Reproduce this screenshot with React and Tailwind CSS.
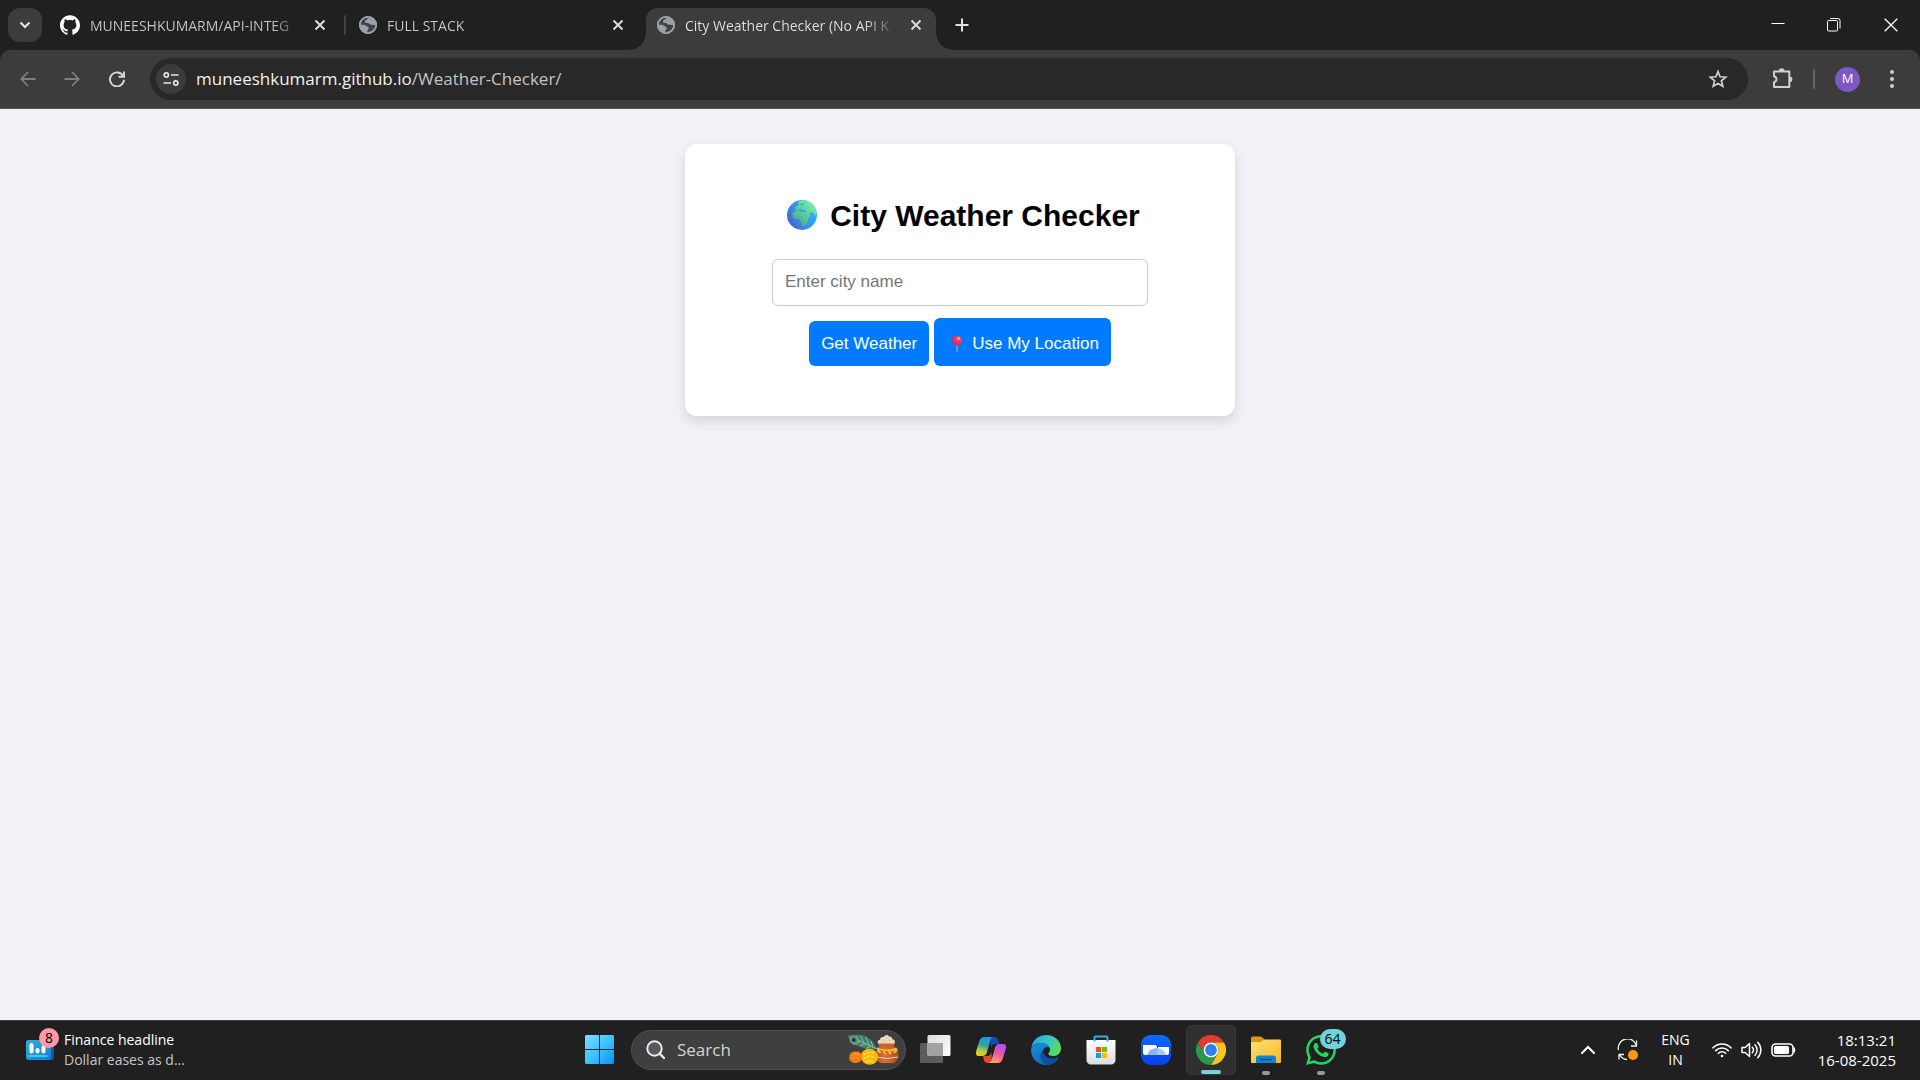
import { SiGithub, SiWhatsapp } from "react-icons/si";

function GlobeFavicon() {
  return (
    <svg viewBox="0 0 18 18" className="h-[18px] w-[18px] shrink-0" aria-hidden="true">
      <circle cx="9" cy="9" r="9" fill="#9aa0a6" />
      <path
        d="M10.500 1.800C8.800 2 8.400 3 7.500 3.800 6 4.300 5.600 5.600 6.200 6.600 7.500 7.300 9.500 6.800 10.500 8c.7 1 2.300.6 3.400.8.8.3 2 .6 2.300-.4.2 2.600-1.200 5.300-3.700 6.700-1.200.8-2.700 1.200-4.200 1 .2-1-.3-1.600.7-2.400 1-.6 1.200-1.700.3-2.400C8 10.500 6.500 9 4.500 8.800c-1-.1-2.200.2-2.800-.6C2 4.800 5 1.600 8.800 1.700z"
        fill="#3f4347"
      />
      <path d="M10.500 1.800c-.4 1-.9 1.300-.3 2.200.4.800-1.400 1.200-.9 2 .7.900 2.200.2 3 1.200 1 1 2.800.6 3.900.8-.2-3-2.400-5.600-5.700-6.200z" fill="#9aa0a6" />
      <circle cx="9" cy="9" r="8.200" fill="none" stroke="#9aa0a6" strokeWidth="1.600" />
    </svg>
  );
}

function CloseGlyph() {
  return (
    <svg viewBox="0 0 12 12" className="h-3 w-3" aria-hidden="true">
      <path d="M1.500 1.500l9 9M10.500 1.500l-9 9" stroke="#dedede" strokeWidth="1.900" />
    </svg>
  );
}

function Tab({ icon, title, active }) {
  return (
    <div className="flex h-[34px] min-w-0 flex-1 items-center gap-2.5 pr-3 pl-[11px]">
      {icon}
      <span
        className={
          active
            ? "min-w-0 flex-1 bg-[linear-gradient(90deg,#e4e4e4_84%,#3c3c3c)] bg-clip-text text-[14px] whitespace-nowrap text-transparent"
            : "min-w-0 flex-1 bg-[linear-gradient(90deg,#c8c8c8_86%,#1f2120)] bg-clip-text text-[14px] whitespace-nowrap text-transparent"
        }
      >
        {title}
      </span>
      <button type="button" aria-label={"Close " + title} className="flex h-4 w-4 shrink-0 items-center justify-center">
        <CloseGlyph />
      </button>
    </div>
  );
}

function TabStrip() {
  return (
    <div className="flex h-[50px] items-center bg-[#1f2120] pl-2">
      <button type="button" aria-label="Search tabs" className="flex h-[34px] w-[34px] shrink-0 items-center justify-center rounded-[12px] bg-[#3c3c3c]">
        <svg viewBox="0 0 12 8" className="h-2 w-3" aria-hidden="true">
          <path d="M1.500 1.500L6 6l4.500-4.500" fill="none" stroke="#e8e8e8" strokeWidth="2" />
        </svg>
      </button>
      <div className="flex w-[298px] pl-[7px]">
        <Tab icon={<SiGithub className="h-5 w-5 shrink-0 text-white" aria-hidden="true" />} title="MUNEESHKUMARM/API-INTEG" />
      </div>
      <div className="ml-1 h-5 w-0.5 shrink-0 rounded bg-[#3f4140]" />
      <div className="ml-0.5 flex w-[290px]">
        <Tab icon={<GlobeFavicon />} title="FULL STACK" />
      </div>
      <div className="ml-2 flex w-[290px] self-stretch pt-2">
        <div className="relative flex w-full rounded-t-[12px] bg-[#3c3c3c]">
          <span className="absolute bottom-0 -left-4 h-4 w-4 bg-[radial-gradient(circle_at_0_0,transparent_15px,#3c3c3c_16px)]" />
          <span className="absolute -right-4 bottom-0 h-4 w-4 bg-[radial-gradient(circle_at_100%_0,transparent_15px,#3c3c3c_16px)]" />
          <Tab active icon={<GlobeFavicon />} title="City Weather Checker (No API K" />
        </div>
      </div>
      <button type="button" aria-label="New tab" className="ml-[18px] flex h-4 w-4 shrink-0 items-center justify-center">
        <svg viewBox="0 0 14 14" className="h-3.5 w-3.5" aria-hidden="true">
          <path d="M7 .5v13M.5 7h13" stroke="#e0e0e0" strokeWidth="2" />
        </svg>
      </button>
      <div className="ml-auto flex items-center">
        <button type="button" aria-label="Minimize" className="flex h-12 w-14 items-center justify-center">
          <svg viewBox="0 0 14 14" className="h-3.5 w-3.5" aria-hidden="true">
            <path d="M.5 5.500h13" stroke="#fff" />
          </svg>
        </button>
        <button type="button" aria-label="Restore" className="flex h-12 w-14 items-center justify-center">
          <svg viewBox="0 0 14 14" className="h-3.5 w-3.5" fill="none" stroke="#fff" aria-hidden="true">
            <rect x=".5" y="2.500" width="10" height="10.500" rx="1" />
            <path d="M3 .5h8a2 2 0 012 2v8" />
          </svg>
        </button>
        <button type="button" aria-label="Close window" className="flex h-12 w-[58px] items-center justify-center">
          <svg viewBox="0 0 14 14" className="h-3.5 w-3.5" aria-hidden="true">
            <path d="M.7.7l12.600 12.600M13.300.7L.7 13.300" stroke="#fff" strokeWidth="1.300" />
          </svg>
        </button>
      </div>
    </div>
  );
}

function Toolbar() {
  return (
    <div className="bg-[#1f2120]">
      <div className="flex h-[59px] items-center rounded-t-[10px] border-b border-[#515151] bg-[#3c3c3c] pl-[18px]">
        <button type="button" aria-label="Back" className="flex h-5 w-5 items-center justify-center">
          <svg viewBox="0 0 16 16" className="h-4 w-4" fill="none" stroke="#7f7f7f" strokeWidth="1.800" aria-hidden="true">
            <path d="M15.500 8H1.500M8 1L1.300 8 8 15" />
          </svg>
        </button>
        <button type="button" aria-label="Forward" className="ml-6 flex h-5 w-5 items-center justify-center">
          <svg viewBox="0 0 16 16" className="h-4 w-4" fill="none" stroke="#7f7f7f" strokeWidth="1.800" aria-hidden="true">
            <path d="M.5 8h14M8 1l6.700 7L8 15" />
          </svg>
        </button>
        <button type="button" aria-label="Reload" className="ml-[25px] flex h-5 w-5 items-center justify-center">
          <svg viewBox="0 0 16 16" className="h-4 w-4" fill="none" stroke="#d8d8d8" strokeWidth="1.900" aria-hidden="true">
            <path d="M14 4.800A7 7 0 1015 8.800M15 .5v5.300H9.600" />
          </svg>
        </button>
        <div className="ml-[23px] flex h-[42px] min-w-0 flex-1 items-center rounded-full bg-[#282828] pr-5 pl-1.5">
          <button type="button" aria-label="View site information" className="flex h-[30px] w-[30px] shrink-0 items-center justify-center rounded-full bg-[#3c3c3c]">
            <svg viewBox="0 0 16 14" className="h-3.5 w-4" fill="none" stroke="#e3e3e3" strokeWidth="1.700" aria-hidden="true">
              <circle cx="3.300" cy="3" r="2.100" />
              <path d="M8 3h7.500M.5 11H8" />
              <circle cx="12.800" cy="11" r="2.100" />
            </svg>
          </button>
          <div className="ml-2.5 min-w-0 flex-1 text-[17px] whitespace-nowrap text-[#f0f0f0]">
            muneeshkumarm.github.io<span className="text-[#c4c4c4]">/Weather-Checker/</span>
          </div>
          <button type="button" aria-label="Bookmark this tab" className="flex h-5 w-5 items-center justify-center">
            <svg viewBox="0 0 20 20" className="h-5 w-5" fill="none" stroke="#cfcfcf" strokeWidth="1.700" aria-hidden="true">
              <path d="M10 2.600l2.100 5.200 5.600.4-4.300 3.600 1.400 5.500L10 14.400l-4.800 2.900 1.400-5.500-4.300-3.600 5.600-.4z" />
            </svg>
          </button>
        </div>
        <button type="button" aria-label="Extensions" className="ml-[23px] flex h-6 w-6 items-center justify-center">
          <svg viewBox="0 0 22 22" className="h-[22px] w-[22px]" aria-hidden="true">
            <path d="M2 3.600h15.300v15.300H2v-4.700c1.600-.5 2.500-1.500 2.500-3S3.600 8.700 2 8.200z" fill="none" stroke="#cfcfcf" strokeWidth="2" strokeLinejoin="round" />
            <path d="M6.800 3.200a2.900 2.900 0 015.800 0zM17.500 8.400a2.900 2.900 0 010 5.800z" fill="#cfcfcf" />
          </svg>
        </button>
        <div className="ml-[18px] h-5 w-0.5 rounded bg-[#666]" />
        <button type="button" aria-label="Profile" className="ml-5 flex h-[25px] w-[25px] items-center justify-center rounded-full bg-[#7e57c2] text-[13px] text-white">
          M
        </button>
        <button type="button" aria-label="Menu" className="mr-[18px] ml-[22px] flex h-5 w-5 items-center justify-center">
          <svg viewBox="0 0 4 18" className="h-[18px] w-1" fill="#cfcfcf" aria-hidden="true">
            <circle cx="2" cy="2" r="2" />
            <circle cx="2" cy="9" r="2" />
            <circle cx="2" cy="16" r="2" />
          </svg>
        </button>
      </div>
    </div>
  );
}

function EarthEmoji() {
  return (
    <svg viewBox="0 0 32 32" className="h-8 w-8 shrink-0" aria-hidden="true">
      <defs>
        <linearGradient id="sea" x1="1" y1="0.200" x2="0" y2="0.900">
          <stop offset="0" stopColor="#35b9ff" />
          <stop offset=".5" stopColor="#3594ee" />
          <stop offset="1" stopColor="#4856c4" />
        </linearGradient>
        <linearGradient id="land" x1="1" y1="0" x2="0.200" y2="1">
          <stop offset="0" stopColor="#7dffb0" />
          <stop offset="1" stopColor="#43a588" />
        </linearGradient>
      </defs>
      <circle cx="16" cy="16" r="15" fill="url(#sea)" />
      <path
        d="M12 2.600l5-1.500c6 .2 11 4 13 9.500l.7 4-1.700 2.200-1.800-3.300-3.200.2-.8 1.200 1.500 1-1.800 2.600-1 4-2.300 3.500-2.200 1.500-1.800-.8-.8-3.800-1.300-2.800-4 .2-2.800-2-.4-3.600L8.500 12.200l4-.9 4 1.900 3.500-.2-.5-2-3.300.2-1.200-1.500-2.300 1.300-4-.2.7-2.800 3.200-1.800z"
        fill="url(#land)"
      />
      <path d="M14 5.500l2.500-1.200 2 .5-1.800 1.400zM9.500 6l2-1.500.5 1.700z" fill="#359be5" />
    </svg>
  );
}

function PinEmoji() {
  return (
    <svg viewBox="0 0 22 20" className="h-5 w-[22px] shrink-0" aria-hidden="true">
      <defs>
        <radialGradient id="pin" cx=".65" cy=".3" r=".7">
          <stop offset="0" stopColor="#ff7a9c" />
          <stop offset=".35" stopColor="#f93b6c" />
          <stop offset="1" stopColor="#d5225f" />
        </radialGradient>
      </defs>
      <path d="M10.200 9h1.600v8.500l-.8 1-.8-1z" fill="#8f94b5" />
      <circle cx="11" cy="6.500" r="5" fill="url(#pin)" />
      <circle cx="12.800" cy="4.600" r="1" fill="#ffc5d5" />
    </svg>
  );
}

function WeatherCard() {
  return (
    <main className="flex flex-1 items-start justify-center bg-[#f0f2f6] pt-[35px] font-['Liberation_Sans',sans-serif]">
      <section className="flex w-[550px] max-w-full flex-col items-center rounded-[12px] bg-white px-[87px] pt-[53px] pb-[50px] shadow-[0_5px_12px_rgba(0,0,0,0.12)]">
        <h1 className="flex h-9 items-center gap-3 pl-1.5 text-[30px] font-bold whitespace-nowrap text-black">
          <EarthEmoji />
          City Weather Checker
        </h1>
        <form className="mt-[26px] flex w-full flex-col items-center" onSubmit={(e) => e.preventDefault()}>
          <input
            type="text"
            aria-label="City name"
            placeholder="Enter city name"
            className="h-[47px] w-full rounded-[6px] border border-[#ccc] bg-white px-3 pb-0.5 text-[17px] text-black placeholder:text-[#757575]"
          />
          <div className="mt-3 flex items-end gap-[5px]">
            <button type="submit" className="flex h-[45px] items-center rounded-[6px] bg-[#007bff] px-3 text-[17px] whitespace-nowrap text-white">
              Get Weather
            </button>
            <button type="button" className="flex h-12 items-center gap-1 rounded-[6px] bg-[#007bff] px-3 pt-1 text-[17px] whitespace-nowrap text-white">
              <PinEmoji />
              Use My Location
            </button>
          </div>
        </form>
      </section>
    </main>
  );
}

function WidgetIcon() {
  return (
    <svg viewBox="0 0 28 22" className="h-[22px] w-7" aria-hidden="true">
      <defs>
        <linearGradient id="widget" x1="0" y1="0" x2="1" y2="1">
          <stop offset="0" stopColor="#2fb0d8" />
          <stop offset="1" stopColor="#1979d4" />
        </linearGradient>
      </defs>
      <rect x="8" y="1" width="20" height="20" rx="2.500" fill="#1553a4" />
      <rect x="0" y="1" width="25" height="20" rx="2.500" fill="url(#widget)" />
      <path d="M5.500 6v6.500M11.500 11v1.500M17.500 8v4.500" stroke="#fff" strokeWidth="4" strokeLinecap="round" />
      <path d="M3.500 17h17" stroke="#22d4f5" strokeWidth="2" strokeLinecap="round" />
    </svg>
  );
}

function StartIcon() {
  return (
    <svg viewBox="0 0 29 29" className="h-[29px] w-[29px]" aria-hidden="true">
      <defs>
        <linearGradient id="start" gradientUnits="userSpaceOnUse" x1="0" y1="0" x2="29" y2="29">
          <stop offset="0" stopColor="#82dcff" />
          <stop offset=".5" stopColor="#3cc3ff" />
          <stop offset="1" stopColor="#0c90f5" />
        </linearGradient>
      </defs>
      <path d="M1 0h13v14H0V1zM15 0h13l1 1v13H15zM0 15h14v14H1l-1-1zM15 15h14v13l-1 1H15z" fill="url(#start)" />
    </svg>
  );
}

function FestivalArt() {
  return (
    <svg viewBox="0 0 52 32" className="h-8 w-[52px]" aria-hidden="true">
      <defs>
        <linearGradient id="pot" x1="0" y1="0" x2="1" y2="0">
          <stop offset="0" stopColor="#b8502a" />
          <stop offset=".4" stopColor="#d9713d" />
          <stop offset="1" stopColor="#a54722" />
        </linearGradient>
      </defs>
      <path d="M.5 1.500C8 0 15 0 20 3c5 3 8 7 10 12-4 1-9 0-13-1-5-1-9-3-12-6C3 6 1 4 .5 1.500z" fill="#3f7d74" />
      <path d="M3 3l27 12M9 2l3 5M14 2l3 7M19 3l3 8M24 7l2 6M8 9l6-2M13 12l6-2.500M19 14.500l5-2.500" stroke="#9cc9a0" strokeWidth=".8" fill="none" />
      <ellipse cx="7.500" cy="6.500" rx="5" ry="4.200" fill="#b3954a" transform="rotate(25 7.500 6.500)" />
      <ellipse cx="7.300" cy="6.300" rx="3.700" ry="3" fill="#1fa6a8" transform="rotate(25 7.300 6.300)" />
      <circle cx="6.800" cy="6" r="2" fill="#1d2a86" />
      <path d="M31 13h17c3 3 4 6 3.500 9-.5 4-3 6.500-5 7H34c-3-1-5-4-5-7 0-4 1-7 2-9z" fill="url(#pot)" />
      <path d="M31 9h17l-1.500 4.500h-14z" fill="#c9622f" />
      <path d="M30 13.500q10 4 19.500 0l1.200 3-3 3-2-2-2.500 3.500-2.700-3-2.500 3-2.500-3.500-2.500 2-3-2z" fill="#f5b72c" />
      <path d="M33 16l1.500 2L36 16.500M38 17l1.500 2 1.500-2M43.500 17l1.500 1.500 1.500-2" fill="none" stroke="#b8502a" strokeWidth="1" />
      <path d="M29.500 23q10 3 21.500 0" fill="none" stroke="#f6d9b0" strokeWidth="1" />
      <path d="M31 9.500c-1-2 .3-3.500 2-3.800 0-2 2-3 3.500-2.500C37.500.8 41-.2 42 2.500c2-.3 3.500 1 3.300 2.700 2.200.3 3.200 2 2.200 4.300z" fill="#ead9b8" />
      <path d="M35 6h1M39 4h1M42 6.500h1M38 8h1" stroke="#bca67c" strokeWidth="1.200" />
      <path d="M2.500 22c0-3 3-4.500 6-4.500s6 .5 6.500 4c1.500 3-1 7-6 7.500-4 .3-8-2.500-6.500-7z" fill="#f47b12" />
      <path d="M5 22q4-3 8 0M5 25q4-3 8 1M7 19.500h4" stroke="#ffb13b" strokeWidth="1" fill="none" strokeDasharray="2 1" />
      <path d="M14.500 22c-.5-4 3-7 7-7.300 5-.2 9.500 3 9.500 8 0 5-4 8-8.500 8-5 0-8.500-3.500-8-8.700z" fill="#f7b90c" />
      <path d="M17 21q5-5 11-1M17 25q5-5 11-1M19 28.500q4-3 8 0" stroke="#ffdf4d" strokeWidth="1.600" fill="none" strokeDasharray="3 1" />
    </svg>
  );
}

function TaskViewIcon() {
  return (
    <svg viewBox="0 0 31 29" className="h-[29px] w-[31px]" aria-hidden="true">
      <defs>
        <linearGradient id="tvFront" x1="0" y1="0" x2="1" y2="1">
          <stop offset="0" stopColor="#dcdcdc" />
          <stop offset="1" stopColor="#ffffff" />
        </linearGradient>
      </defs>
      <rect x="0" y="8" width="23" height="20" rx="1.500" fill="#5c5c5c" />
      <rect x="7.500" y="0" width="23" height="21" rx="1.500" fill="url(#tvFront)" />
      <path d="M7.500 8H23v13H9l-1.500-1.500z" fill="#a3a3a3" />
    </svg>
  );
}

function CopilotIcon() {
  return (
    <svg viewBox="0 0 30 26" className="h-[26px] w-[30px]" aria-hidden="true">
      <defs>
        <linearGradient id="cpA" x1=".6" y1="0" x2=".3" y2="1">
          <stop offset="0" stopColor="#1b96ee" />
          <stop offset=".45" stopColor="#2fa8a0" />
          <stop offset=".75" stopColor="#b5cf3a" />
          <stop offset="1" stopColor="#f0c630" />
        </linearGradient>
        <linearGradient id="cpB" x1=".7" y1="0" x2=".3" y2="1">
          <stop offset="0" stopColor="#a653ee" />
          <stop offset=".5" stopColor="#ea5a9c" />
          <stop offset="1" stopColor="#ffa763" />
        </linearGradient>
      </defs>
      <path d="M14 0h4.500c2.300 0 3.200 1.400 3.800 3.300L23.500 7H19c-3 0-3 2-4 4z" fill="#1749b5" />
      <path d="M16 26h-4.500c-2.300 0-3-1.400-3.600-3.300L7 19h4.500c2.500 0 3-2 3.800-4z" fill="#e8482b" />
      <path d="M8.500 0h9c-2 0-2.700 1.700-3.300 3.700L11 15c-.8 2.700-2 4-4.700 4H3c-3 0-3.600-2.300-2.700-5.200L3 5C4 2 5.400 0 8.500 0z" fill="url(#cpA)" />
      <path d="M21.500 26h-9c2 0 2.700-1.700 3.300-3.700L19 11c.8-2.700 2-4 4.700-4H27c3 0 3.600 2.300 2.700 5.200L27 21c-1 3-2.400 5-5.500 5z" fill="url(#cpB)" />
    </svg>
  );
}

function EdgeIcon() {
  return (
    <svg viewBox="0 0 30 30" className="h-[30px] w-[30px]" aria-hidden="true">
      <defs>
        <linearGradient id="edgeTop" x1="0" y1=".3" x2="1" y2=".7">
          <stop offset="0" stopColor="#27a9dc" />
          <stop offset=".5" stopColor="#35c8c4" />
          <stop offset="1" stopColor="#62dc50" />
        </linearGradient>
        <linearGradient id="edgeLow" x1="0" y1="0" x2=".6" y2="1">
          <stop offset="0" stopColor="#1c8fdf" />
          <stop offset="1" stopColor="#0e63b8" />
        </linearGradient>
      </defs>
      <path d="M.3 13C1.500 5 7.500 0 15 0c9 0 15 6.500 15 13.200 0 5-3.500 7.800-7.800 7.800-3.700 0-5.200-1.500-5-2.500 1-1 1.800-2 1.800-4 0-3-3.500-6.500-8.500-6.500C5.500 8 1.500 10 .3 13z" fill="url(#edgeTop)" />
      <path d="M.2 13.500C1.800 10 6 8 10.500 8c4 0 7 2 8 4.500-3-1.500-6.300.5-6.600 4.500-.3 5 4.600 9 10.600 8 2-.3 3.500-1 5-2-2.700 4.500-7 7-12.500 7C6 30-.8 22.500.2 13.500z" fill="url(#edgeLow)" />
      <path d="M11.900 15.500c-4 3-4 10 3.600 14.400 5.500-.1 9.500-2.700 12-6.900.3-.7-.3-1.200-1-.8-5.500 2.800-14 .8-14.600-6.700z" fill="#0c4f9d" />
    </svg>
  );
}

function StoreIcon() {
  return (
    <svg viewBox="0 0 30 30" className="h-[30px] w-[30px]" aria-hidden="true">
      <defs>
        <linearGradient id="bag" x1="0" y1="0" x2="0" y2="1">
          <stop offset="0" stopColor="#ffffff" />
          <stop offset="1" stopColor="#dcdcdc" />
        </linearGradient>
      </defs>
      <path d="M.5 5h29v20a4.500 4.500 0 01-4.500 4.500H5A4.500 4.500 0 01.5 25z" fill="url(#bag)" />
      <path d="M8.500 6.500v-4A1 1 0 019.500 1.500h11a1 1 0 011 1v4" fill="none" stroke="#27b0ea" strokeWidth="2" />
      <path d="M10 12h5v5h-5z" fill="#f25022" />
      <path d="M16 12h5v5h-5z" fill="#7fba00" />
      <path d="M10 18h5v5h-5z" fill="#00a4ef" />
      <path d="M16 18h5v5h-5z" fill="#ffb900" />
    </svg>
  );
}

function ZoomIcon() {
  return (
    <svg viewBox="0 0 30 30" className="h-[30px] w-[30px]" aria-hidden="true">
      <defs>
        <linearGradient id="zoomBg" x1="0" y1="0" x2="0" y2="1">
          <stop offset="0" stopColor="#0a6bff" />
          <stop offset="1" stopColor="#0a3fe8" />
        </linearGradient>
      </defs>
      <rect width="30" height="30" rx="9.500" fill="url(#zoomBg)" />
      <path d="M2 10h11.500a2.500 2.500 0 012.500 2.500V20H4.500A2.500 2.500 0 012 17.500z" fill="#fff" />
      <path d="M17 12h11v6a2 2 0 01-2 2h-9z" fill="#fff" />
      <path d="M6.500 20c.5-4 4-6.700 9.500-6.700V20z" fill="#86b4f7" />
      <path d="M16 13.300c5 .3 8.500 3 9 6.700h-9z" fill="#a9caf9" />
    </svg>
  );
}

function ChromeIcon() {
  return (
    <svg viewBox="0 0 30 30" className="h-[30px] w-[30px]" aria-hidden="true">
      <path d="M2 7.500A15 15 0 0128 7.500H15A7.500 7.500 0 008.500 18.800z" fill="#e33b2e" />
      <path d="M28 7.500A15 15 0 0115 30l6.500-11.200A7.500 7.500 0 0015 7.500z" fill="#fcc31e" />
      <path d="M15 30A15 15 0 012 7.500l6.500 11.300a7.500 7.500 0 0013 0z" fill="#27994a" />
      <circle cx="15" cy="15" r="7.500" fill="#fff" />
      <circle cx="15" cy="15" r="5.900" fill="#2f7ff0" />
    </svg>
  );
}

function ExplorerIcon() {
  return (
    <svg viewBox="0 0 30 28" className="h-7 w-[30px]" aria-hidden="true">
      <defs>
        <linearGradient id="folder" x1="0" y1="0" x2="1" y2="1">
          <stop offset="0" stopColor="#ffe07a" />
          <stop offset="1" stopColor="#f8b920" />
        </linearGradient>
      </defs>
      <path d="M0 2a1.500 1.500 0 011.500-1.500H9c1.500 0 2 .6 3 1.600L14 4v6H0z" fill="#dd9a10" />
      <path d="M0 6h9.500l4-2.500H29a1 1 0 011 1V26a1 1 0 01-1 1H1a1 1 0 01-1-1z" fill="url(#folder)" />
      <path d="M5 27v-5a2.500 2.500 0 012.500-2.500h15A2.500 2.500 0 0125 22v5z" fill="#1183d6" />
      <path d="M9 23.500h12" stroke="#0a4f93" strokeWidth="1.500" />
    </svg>
  );
}

const apps = [
  { name: "Task view", icon: <TaskViewIcon /> },
  { name: "Copilot", icon: <CopilotIcon /> },
  { name: "Edge", icon: <EdgeIcon /> },
  { name: "Microsoft Store", icon: <StoreIcon /> },
  { name: "Zoom", icon: <ZoomIcon /> },
  { name: "Chrome", icon: <ChromeIcon />, state: "active" },
  { name: "File Explorer", icon: <ExplorerIcon />, state: "open" },
  { name: "WhatsApp", icon: <SiWhatsapp className="h-[30px] w-[30px] text-[#25d366]" aria-hidden="true" />, state: "open", badge: "64" },
];

function TaskButton({ name, icon, state, badge }) {
  return (
    <div className="flex w-[55px] justify-center">
      <button
        type="button"
        aria-label={name}
        className={
          state === "active"
            ? "relative flex h-[50px] w-[50px] items-center justify-center rounded-[5px] border border-[#383838] bg-[#2f2f2f]"
            : "relative flex h-[50px] w-[50px] items-center justify-center"
        }
      >
        {icon}
        {badge && (
          <span className="absolute top-1 right-0 flex h-5 w-[26px] items-center justify-center rounded-full bg-[#6fd3da] text-[14px] text-black">
            {badge}
          </span>
        )}
        {state === "active" && <span className="absolute bottom-0 h-1 w-5 rounded-full bg-[#76d3da]" />}
        {state === "open" && <span className="absolute bottom-0 h-1 w-2 rounded-full bg-[#9a9a9a]" />}
      </button>
    </div>
  );
}

function Taskbar() {
  return (
    <footer className="grid h-[60px] grid-cols-[1fr_auto_1fr] items-center border-t border-[#3e4142] bg-[#202020] pb-0.5 text-[14px] leading-5 text-white">
      <button type="button" className="flex items-center gap-2.5 pl-[26px] text-left">
        <span className="relative flex">
          <WidgetIcon />
          <span className="absolute -top-[11px] -right-[5px] flex h-5 w-5 items-center justify-center rounded-full bg-[#ff99a4] text-[14px] text-black">8</span>
        </span>
        <span>
          <span className="block">Finance headline</span>
          <span className="block text-[#c6c6c6]">Dollar eases as d...</span>
        </span>
      </button>
      <div className="flex items-center">
        <button type="button" aria-label="Start" className="flex w-[55px] justify-center">
          <StartIcon />
        </button>
        <label className="ml-1 flex h-10 w-[275px] items-center rounded-full border border-[#505050] bg-[#3f3f3f] pr-1.5 pl-3.5">
          <svg viewBox="0 0 19 19" className="h-[19px] w-[19px] shrink-0" fill="#555a5f" stroke="#e8ebee" strokeWidth="2" aria-hidden="true">
            <circle cx="8.500" cy="8.500" r="7.200" />
            <path d="M13.700 13.700l4.300 4.300" strokeLinecap="round" strokeWidth="2.400" />
          </svg>
          <input type="search" aria-label="Search" placeholder="Search" className="ml-3 min-w-0 flex-1 bg-transparent text-[17px] placeholder:text-[#d3d3d3]" />
          <FestivalArt />
        </label>
        <div className="flex pl-0.5">
          {apps.map((app) => (
            <TaskButton key={app.name} {...app} />
          ))}
        </div>
      </div>
      <div className="flex items-center justify-end pr-6">
        <button type="button" aria-label="Show hidden icons" className="flex h-5 w-5 items-center justify-center">
          <svg viewBox="0 0 14 9" className="h-[9px] w-3.5" aria-hidden="true">
            <path d="M1 8l6-6 6 6" fill="none" stroke="#fff" strokeWidth="2" strokeLinecap="round" />
          </svg>
        </button>
        <button type="button" aria-label="Updates pending" className="ml-[19px] flex">
          <svg viewBox="0 0 22 22" className="h-[22px] w-[22px]" fill="none" stroke="#f3f3f3" strokeWidth="1.300" aria-hidden="true">
            <path d="M1.500 11A9 9 0 0119.500 7M19.500 1.500V7H14M10 20.500A9 9 0 012.500 15.500M2 20.500v-5h5" />
            <circle cx="16" cy="16" r="5" fill="#ff9a0f" stroke="none" />
          </svg>
        </button>
        <button type="button" className="ml-[22px] text-center">
          <span className="block">ENG</span>
          <span className="block">IN</span>
        </button>
        <button type="button" aria-label="Network, volume and battery" className="ml-[22px] flex items-center gap-[9px]">
          <svg viewBox="0 0 20 16" className="h-4 w-5" fill="none" stroke="#fff" strokeWidth="1.600" strokeLinecap="round" aria-hidden="true">
            <path d="M1 5.800a12.500 12.500 0 0118 0M3.700 8.600a8.800 8.800 0 0112.600 0M6.400 11.300a5.100 5.100 0 017.200 0" />
            <circle cx="10" cy="14" r="1.300" fill="#fff" stroke="none" />
          </svg>
          <svg viewBox="0 0 21 18" className="h-[18px] w-[21px]" fill="none" stroke="#fff" strokeWidth="1.500" strokeLinecap="round" strokeLinejoin="round" aria-hidden="true">
            <path d="M1 6.500h3.200L8.500 2.500v13L4.200 11.500H1zM11.300 6.300a4 4 0 010 5.400M14 3.800a7.500 7.500 0 010 10.400M16.700 1.300a11 11 0 010 15.400" />
          </svg>
          <svg viewBox="0 0 25 14" className="h-3.5 w-[25px]" aria-hidden="true">
            <rect x="1" y="1" width="21" height="12" rx="3.500" fill="none" stroke="#fff" strokeWidth="1.600" />
            <rect x="3" y="3" width="15" height="8" rx="1.500" fill="#fff" />
            <path d="M23 4.500q1.800 2.500 0 5z" fill="#fff" stroke="#fff" />
          </svg>
        </button>
        <button type="button" className="ml-[22px] text-right text-[15px]">
          <span className="block">18:13:21</span>
          <span className="block">16-08-2025</span>
        </button>
      </div>
    </footer>
  );
}

export default function App() {
  return (
    <div className="flex min-h-screen flex-col font-['Open_Sans','Noto_Sans',sans-serif]">
      <header>
        <TabStrip />
        <Toolbar />
      </header>
      <WeatherCard />
      <Taskbar />
    </div>
  );
}
